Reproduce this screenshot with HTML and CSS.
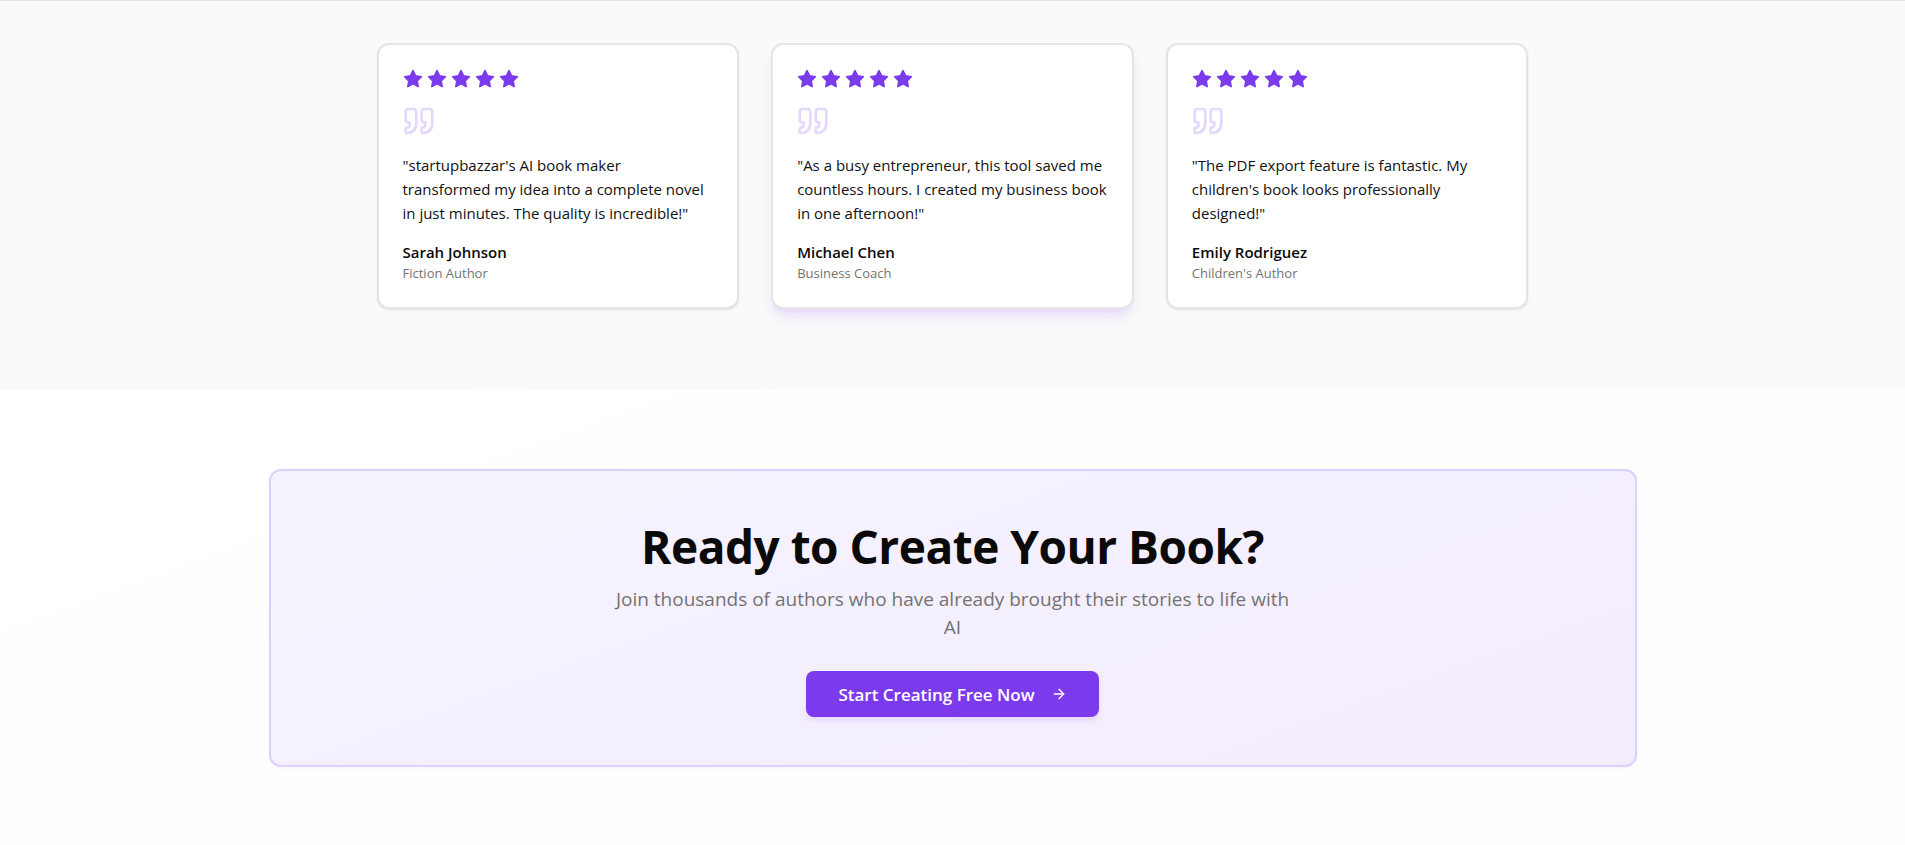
FILE: index.html
```html
<!DOCTYPE html>
<html lang="en">
<head>
<meta charset="utf-8">
<title>Testimonials</title>
<link rel="stylesheet" href="styles.css">
</head>
<body>
<section class="testimonials">
  <div class="grid">
    <article class="card">
      <div class="stars">
        <svg viewBox="0 0 24 24"><polygon points="12 2 15.09 8.26 22 9.27 17 14.14 18.18 21.02 12 17.77 5.82 21.02 7 14.14 2 9.27 8.91 8.26 12 2"/></svg>
        <svg viewBox="0 0 24 24"><polygon points="12 2 15.09 8.26 22 9.27 17 14.14 18.18 21.02 12 17.77 5.82 21.02 7 14.14 2 9.27 8.91 8.26 12 2"/></svg>
        <svg viewBox="0 0 24 24"><polygon points="12 2 15.09 8.26 22 9.27 17 14.14 18.18 21.02 12 17.77 5.82 21.02 7 14.14 2 9.27 8.91 8.26 12 2"/></svg>
        <svg viewBox="0 0 24 24"><polygon points="12 2 15.09 8.26 22 9.27 17 14.14 18.18 21.02 12 17.77 5.82 21.02 7 14.14 2 9.27 8.91 8.26 12 2"/></svg>
        <svg viewBox="0 0 24 24"><polygon points="12 2 15.09 8.26 22 9.27 17 14.14 18.18 21.02 12 17.77 5.82 21.02 7 14.14 2 9.27 8.91 8.26 12 2"/></svg>
      </div>
      <svg class="quote" viewBox="0 0 24 24"><path d="M3 21c3 0 7-1 7-8V5c0-1.25-.756-2.017-2-2H4c-1.25 0-2 .75-2 1.972V11c0 1.25.75 2 2 2 1 0 1 0 1 1v1c0 1-1 2-2 2s-1 .008-1 1.031V20c0 1 0 1 1 1z"/><path d="M15 21c3 0 7-1 7-8V5c0-1.25-.757-2.017-2-2h-4c-1.25 0-2 .75-2 1.972V11c0 1.25.75 2 2 2h.75c0 2.25.25 4-2.75 4v3c0 1 0 1 1 1z"/></svg>
      <p class="text">"startupbazzar's AI book maker transformed&nbsp;my idea into a complete novel in just minutes. The quality is incredible!"</p>
      <div class="name">Sarah Johnson</div>
      <div class="role">Fiction Author</div>
    </article>
    <article class="card card-active">
      <div class="stars">
        <svg viewBox="0 0 24 24"><polygon points="12 2 15.09 8.26 22 9.27 17 14.14 18.18 21.02 12 17.77 5.82 21.02 7 14.14 2 9.27 8.91 8.26 12 2"/></svg>
        <svg viewBox="0 0 24 24"><polygon points="12 2 15.09 8.26 22 9.27 17 14.14 18.18 21.02 12 17.77 5.82 21.02 7 14.14 2 9.27 8.91 8.26 12 2"/></svg>
        <svg viewBox="0 0 24 24"><polygon points="12 2 15.09 8.26 22 9.27 17 14.14 18.18 21.02 12 17.77 5.82 21.02 7 14.14 2 9.27 8.91 8.26 12 2"/></svg>
        <svg viewBox="0 0 24 24"><polygon points="12 2 15.09 8.26 22 9.27 17 14.14 18.18 21.02 12 17.77 5.82 21.02 7 14.14 2 9.27 8.91 8.26 12 2"/></svg>
        <svg viewBox="0 0 24 24"><polygon points="12 2 15.09 8.26 22 9.27 17 14.14 18.18 21.02 12 17.77 5.82 21.02 7 14.14 2 9.27 8.91 8.26 12 2"/></svg>
      </div>
      <svg class="quote" viewBox="0 0 24 24"><path d="M3 21c3 0 7-1 7-8V5c0-1.25-.756-2.017-2-2H4c-1.25 0-2 .75-2 1.972V11c0 1.25.75 2 2 2 1 0 1 0 1 1v1c0 1-1 2-2 2s-1 .008-1 1.031V20c0 1 0 1 1 1z"/><path d="M15 21c3 0 7-1 7-8V5c0-1.25-.757-2.017-2-2h-4c-1.25 0-2 .75-2 1.972V11c0 1.25.75 2 2 2h.75c0 2.25.25 4-2.75 4v3c0 1 0 1 1 1z"/></svg>
      <p class="text">"As a busy entrepreneur, this tool saved me countless hours. I created my business book in one afternoon!"</p>
      <div class="name">Michael Chen</div>
      <div class="role">Business Coach</div>
    </article>
    <article class="card">
      <div class="stars">
        <svg viewBox="0 0 24 24"><polygon points="12 2 15.09 8.26 22 9.27 17 14.14 18.18 21.02 12 17.77 5.82 21.02 7 14.14 2 9.27 8.91 8.26 12 2"/></svg>
        <svg viewBox="0 0 24 24"><polygon points="12 2 15.09 8.26 22 9.27 17 14.14 18.18 21.02 12 17.77 5.82 21.02 7 14.14 2 9.27 8.91 8.26 12 2"/></svg>
        <svg viewBox="0 0 24 24"><polygon points="12 2 15.09 8.26 22 9.27 17 14.14 18.18 21.02 12 17.77 5.82 21.02 7 14.14 2 9.27 8.91 8.26 12 2"/></svg>
        <svg viewBox="0 0 24 24"><polygon points="12 2 15.09 8.26 22 9.27 17 14.14 18.18 21.02 12 17.77 5.82 21.02 7 14.14 2 9.27 8.91 8.26 12 2"/></svg>
        <svg viewBox="0 0 24 24"><polygon points="12 2 15.09 8.26 22 9.27 17 14.14 18.18 21.02 12 17.77 5.82 21.02 7 14.14 2 9.27 8.91 8.26 12 2"/></svg>
      </div>
      <svg class="quote" viewBox="0 0 24 24"><path d="M3 21c3 0 7-1 7-8V5c0-1.25-.756-2.017-2-2H4c-1.25 0-2 .75-2 1.972V11c0 1.25.75 2 2 2 1 0 1 0 1 1v1c0 1-1 2-2 2s-1 .008-1 1.031V20c0 1 0 1 1 1z"/><path d="M15 21c3 0 7-1 7-8V5c0-1.25-.757-2.017-2-2h-4c-1.25 0-2 .75-2 1.972V11c0 1.25.75 2 2 2h.75c0 2.25.25 4-2.75 4v3c0 1 0 1 1 1z"/></svg>
      <p class="text">"The PDF export feature is fantastic. My children's book looks professionally designed!"</p>
      <div class="name">Emily Rodriguez</div>
      <div class="role">Children's Author</div>
    </article>
  </div>
</section>
<section class="cta">
  <div class="cta-box">
    <h2 class="cta-title">Ready to Create Your Book?</h2>
    <p class="cta-sub">Join thousands of authors who have already brought their stories to life with AI</p>
    <a class="cta-btn" href="#">Start Creating Free Now
      <svg viewBox="0 0 24 24"><path d="M5 12h14"/><path d="m12 5 7 7-7 7"/></svg>
    </a>
  </div>
</section>
</body>
</html>
```

FILE: styles.css
```css
* { box-sizing: border-box; }
html, body { margin: 0; padding: 0; }
body {
  font-family: "Open Sans", "Noto Sans", "Liberation Sans", sans-serif;
  color: #0a0a0a;
  background: #ffffff;
  -webkit-font-smoothing: antialiased;
}
.testimonials {
  background: #fafafa;
  border-top: 1px solid #e5e5e5;
  padding: 42px 0 80px;
}
.grid {
  max-width: 1152px;
  margin: 0 auto;
  display: grid;
  grid-template-columns: repeat(3, 1fr);
  gap: 32px;
}
.card {
  background: #ffffff;
  border: 2px solid #e5e5e5;
  border-radius: 12px;
  padding: 24px;
  box-shadow: 0 1px 3px rgba(0,0,0,0.06), 0 1px 2px rgba(0,0,0,0.04);
}
.card-active {
  box-shadow: 0 10px 15px -3px rgba(124,58,237,0.14), 0 4px 6px -4px rgba(124,58,237,0.14);
}
.stars { display: flex; gap: 4px; margin-bottom: 16px; }
.stars svg {
  width: 20px; height: 20px;
  fill: #7c3aed; stroke: #7c3aed; stroke-width: 2; stroke-linejoin: round;
}
.quote {
  display: block;
  width: 32px; height: 32px;
  fill: none; stroke: #e4d8fd; stroke-width: 2; stroke-linecap: round; stroke-linejoin: round;
  margin-bottom: 16px;
}
.text {
  margin: 0 0 16px;
  font-size: 15px;
  line-height: 24px;
  color: #111111;
}
.name {
  font-size: 15px;
  font-weight: 600;
  line-height: 22px;
  color: #0a0a0a;
}
.role {
  font-size: 13px;
  line-height: 20px;
  color: #737373;
}
.cta {
  padding: 80px 0;
  background: linear-gradient(160deg, #ffffff 0%, #fdfdfd 100%);
}
.cta-box {
  max-width: 1368px;
  margin: 0 auto;
  border: 2px solid #ddd0fb;
  border-radius: 12px;
  padding: 48px;
  text-align: center;
  background: linear-gradient(160deg, #f6f3fe 0%, #f3ecfd 100%);
  box-shadow: 0 1px 3px rgba(124,58,237,0.06);
}
.cta-title {
  margin: 0 0 12px;
  font-size: 46px;
  line-height: 54px;
  font-weight: 700;
  letter-spacing: -0.5px;
  color: #0a0a0a;
}
.cta-sub {
  max-width: 686px;
  margin: 0 auto 30px;
  font-size: 19px;
  line-height: 28px;
  color: #737373;
}
.cta-btn {
  display: inline-flex;
  align-items: center;
  gap: 16px;
  height: 46px;
  padding: 0 32px;
  border-radius: 8px;
  background: #7c3aed;
  color: #ffffff;
  font-size: 17px;
  font-weight: 600;
  text-decoration: none;
  box-shadow: 0 4px 6px -1px rgba(124,58,237,0.15);
}
.cta-btn svg {
  width: 16px; height: 16px;
  fill: none; stroke: #ffffff; stroke-width: 2; stroke-linecap: round; stroke-linejoin: round;
}
```
